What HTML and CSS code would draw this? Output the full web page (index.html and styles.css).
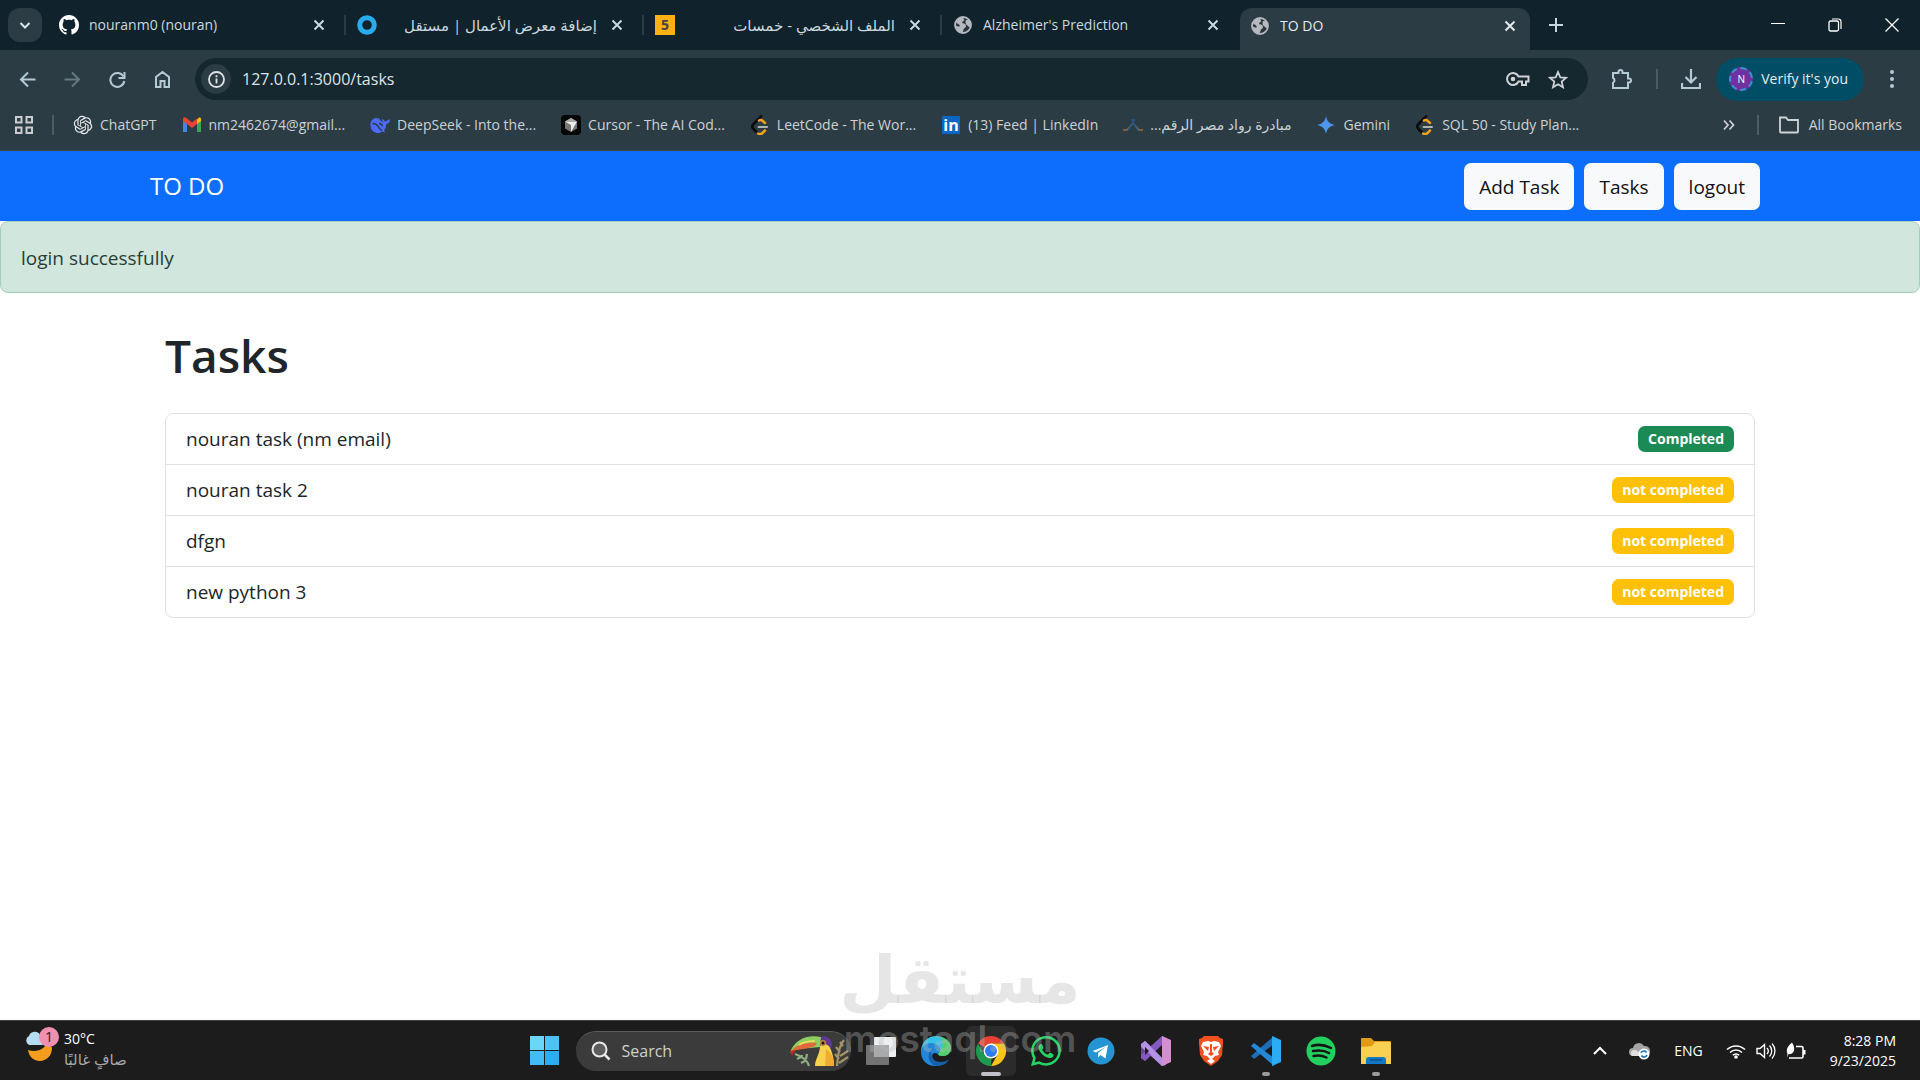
FILE: index.html
```html
<!DOCTYPE html>
<html lang="en">
<head>
    <title>TO DO</title>
    <meta charset="UTF-8">
    <meta name="viewport" content="width=device-width, initial-scale=1">
    <link rel="stylesheet" href="styles.css">
</head>
<body>
    <!-- shared icons -->
    <svg class="sprite" aria-hidden="true">
        <symbol id="x" viewBox="0 0 14 14"><path d="M2.500 2.500l9 9M11.500 2.500l-9 9" stroke="currentColor" stroke-width="2" fill="none"/></symbol>
        <symbol id="globe" viewBox="0 0 20 20">
            <circle cx="10" cy="10" r="8" fill="#28353b" stroke="#b5b8bf" stroke-width="1.800"/>
            <path d="M3 7c2-4 5-5 8-4.500-1 1-.5 2 .5 2.500C11 6.500 9 6 9 8c1.500.5 4 .5 4 3 0 1-1 2-2 2.500L9.500 17.500C5 17.500 3 14 2.500 10c1.500 1 2.500 1.500 3.500 1.500.5 0 1-.5.500-1.500C5.500 9 4 8.500 3 7zM13 5l3.500 0c1.500 2 1.500 4.500.5 7.500-1.500-.5-2-2-3.500-2.500-1-1.500-1.500-3-.5-5z" fill="#b5b8bf"/>
        </symbol>
        <symbol id="leet" viewBox="0 0 20 20">
            <path d="M11 1.500L3.500 9c-1.500 1.500-1.500 3.500 0 5L7 17.500" fill="none" stroke="#0a0a0a" stroke-width="2.500" stroke-linecap="round"/>
            <path d="M9 5.500c1.500-1 2.800-.5 3.800.5L15 8M8 18.500c1.500.8 3.200.7 4.500-.5L15 15.500" fill="none" stroke="#f5a11c" stroke-width="2.500" stroke-linecap="round"/>
            <path d="M8.500 12H17" stroke="#b3b3b3" stroke-width="2" stroke-linecap="round"/>
        </symbol>
    </svg>

    <header class="browser">
        <div class="tabstrip">
            <button class="tab-search" aria-label="Search tabs"><svg width="14" height="14" viewBox="0 0 14 14"><path d="M2.500 5L7 9.500 11.500 5" fill="none" stroke="#d9e6ec" stroke-width="2"/></svg></button>
            <div class="tab">
                <svg class="fav" viewBox="0 0 16 16"><path fill="#fff" d="M8 0C3.580 0 0 3.580 0 8c0 3.540 2.290 6.530 5.470 7.590.4.070.55-.17.55-.38 0-.19-.01-.82-.01-1.490-2.010.37-2.530-.49-2.690-.94-.09-.23-.48-.94-.82-1.130-.28-.15-.68-.52-.01-.53.63-.01 1.080.58 1.230.82.72 1.210 1.870.87 2.330.66.070-.52.280-.87.510-1.070-1.780-.2-3.640-.89-3.640-3.950 0-.87.310-1.590.82-2.150-.08-.2-.36-1.020.08-2.120 0 0 .67-.21 2.200.82.64-.18 1.320-.27 2-.27s1.360.09 2 .27c1.530-1.040 2.200-.82 2.200-.82.44 1.100.16 1.920.08 2.120.51.56.82 1.270.82 2.150 0 3.070-1.870 3.750-3.650 3.950.29.25.54.73.54 1.480 0 1.070-.01 1.930-.01 2.200 0 .21.15.46.55.38A8.010 8.010 0 0 0 16 8c0-4.420-3.580-8-8-8z"/></svg>
                <span class="tab-title">nouranm0 (nouran)</span>
                <button class="close" aria-label="Close tab"><svg><use href="#x"/></svg></button>
            </div>
            <div class="tab">
                <svg class="fav" viewBox="0 0 20 20"><circle cx="10" cy="10" r="7.300" fill="none" stroke="#2aabee" stroke-width="5"/></svg>
                <span class="tab-title" dir="rtl">إضافة معرض الأعمال | مستقل</span>
                <button class="close" aria-label="Close tab"><svg><use href="#x"/></svg></button>
            </div>
            <div class="tab">
                <svg class="fav" viewBox="0 0 20 20"><rect width="20" height="20" fill="#fbb114"/><text class="five" x="10" y="15" text-anchor="middle">5</text></svg>
                <span class="tab-title" dir="rtl">الملف الشخصي - خمسات</span>
                <button class="close" aria-label="Close tab"><svg><use href="#x"/></svg></button>
            </div>
            <div class="tab">
                <svg class="fav"><use href="#globe"/></svg>
                <span class="tab-title">Alzheimer's Prediction</span>
                <button class="close" aria-label="Close tab"><svg><use href="#x"/></svg></button>
            </div>
            <div class="tab active">
                <svg class="fav"><use href="#globe"/></svg>
                <span class="tab-title">TO DO</span>
                <button class="close" aria-label="Close tab"><svg><use href="#x"/></svg></button>
            </div>
            <button class="new-tab" aria-label="New tab"><svg width="14" height="14" viewBox="0 0 14 14"><path d="M7 0v14M0 7h14" stroke="#c5d8e0" stroke-width="2"/></svg></button>
            <div class="win-buttons">
                <button aria-label="Minimize"><svg width="14" height="14" viewBox="0 0 14 14"><path d="M0 5.500h14" stroke="#fff"/></svg></button>
                <button aria-label="Restore"><svg width="14" height="14" viewBox="0 0 14 14"><rect x="1" y="3" width="9.500" height="10" rx="1.500" fill="none" stroke="#fff" stroke-width="1.300"/><path d="M4 1h6.500a2.500 2.500 0 0 1 2.500 2.500V11" fill="none" stroke="#fff" stroke-width="1.200"/></svg></button>
                <button aria-label="Close"><svg width="14" height="14" viewBox="0 0 14 14"><path d="M.5.5l13 13M13.500.5l-13 13" stroke="#fff" stroke-width="1.300"/></svg></button>
            </div>
        </div>

        <div class="toolbar">
            <button class="tool" aria-label="Back"><svg width="17" height="17" viewBox="0 0 17 17"><path d="M16.500 8.500H2M9 1.500l-7 7 7 7" fill="none" stroke="#b4cad5" stroke-width="2"/></svg></button>
            <button class="tool" aria-label="Forward"><svg width="17" height="17" viewBox="0 0 17 17"><path d="M.5 8.500H15M8 1.500l7 7-7 7" fill="none" stroke="#667880" stroke-width="2"/></svg></button>
            <button class="tool" aria-label="Reload"><svg width="17" height="17" viewBox="0 0 17 17"><path d="M14.500 5.500A7 7 0 1 0 15.300 10" fill="none" stroke="#b4cad5" stroke-width="2"/><path d="M15.500 1v6h-6" fill="none" stroke="#b4cad5" stroke-width="2"/></svg></button>
            <button class="tool" aria-label="Home"><svg width="17" height="18" viewBox="0 0 17 18"><path d="M2 17V7l6.500-5L15 7v10h-4.500v-6h-4v6z" fill="none" stroke="#b4cad5" stroke-width="2"/></svg></button>
            <div class="omnibox">
                <button class="info" aria-label="Site information"><svg width="17" height="17" viewBox="0 0 17 17"><circle cx="8.500" cy="8.500" r="7.500" fill="none" stroke="#e0e3e5" stroke-width="1.800"/><path d="M8.500 7.500v5M8.500 4.200v2" stroke="#e0e3e5" stroke-width="1.800"/></svg></button>
                <input class="url" type="text" aria-label="Address" value="127.0.0.1:3000/tasks">
                <button aria-label="Passwords"><svg width="24" height="16" viewBox="0 0 24 16"><path d="M12.500 5.500A6 6 0 1 0 12.500 10.500H16V14H20V10.500H22.500V5.500Z" fill="none" stroke="#d0d3d6" stroke-width="2"/><circle cx="7" cy="8" r="2.300" fill="#d0d3d6"/></svg></button>
                <button aria-label="Bookmark this tab"><svg width="20" height="19" viewBox="0 0 20 19"><path d="M10 2l2.300 5.300 5.700.5-4.300 3.800 1.300 5.700-5-3-5 3 1.300-5.700L2 7.800l5.700-.5z" fill="none" stroke="#d0d3d6" stroke-width="1.800"/></svg></button>
            </div>
            <button class="ext" aria-label="Extensions"><svg width="22" height="22" viewBox="0 0 22 22"><path d="M2 5h5.500V4a2 2 0 0 1 4 0v1H17v5.500h1a2 2 0 0 1 0 4h-1V20H2v-5.200a2.800 2.800 0 0 0 0-5z" fill="none" stroke="#b4cad5" stroke-width="2"/></svg></button>
            <span class="divider"></span>
            <button class="download" aria-label="Downloads"><svg width="20" height="20" viewBox="0 0 20 20"><path d="M10 0v13M4.500 8l5.500 5.500L15.500 8M1 14v5h18v-5" fill="none" stroke="#b4cad5" stroke-width="2.200"/></svg></button>
            <button class="verify"><span class="avatar">N</span>Verify it's you</button>
            <button class="menu" aria-label="Menu"><svg width="6" height="20" viewBox="0 0 6 20"><g fill="#b4cad5"><circle cx="3" cy="3" r="2"/><circle cx="3" cy="10" r="2"/><circle cx="3" cy="17" r="2"/></g></svg></button>
        </div>

        <nav class="bookmarks" aria-label="Bookmarks">
            <button class="apps" aria-label="Apps"><svg width="18" height="18" viewBox="0 0 18 18"><path d="M1 1h5.500v5.500H1zM11.500 1H17v5.500h-5.500zM1 11.500h5.500V17H1zM11.500 11.500H17V17h-5.500z" fill="none" stroke="#c9cdd0" stroke-width="2"/></svg></button>
            <span class="divider"></span>
            <a href="#"><svg class="bm" viewBox="-1 -1 26 26"><path fill="#e8eaec" d="M22.2819 9.8211a5.9847 5.9847 0 0 0-.5157-4.9108 6.0462 6.0462 0 0 0-6.5098-2.9A6.0651 6.0651 0 0 0 4.9807 4.1818a5.9847 5.9847 0 0 0-3.9977 2.9 6.0462 6.0462 0 0 0 .7427 7.0966 5.98 5.98 0 0 0 .511 4.9107 6.051 6.051 0 0 0 6.5146 2.9001A5.9847 5.9847 0 0 0 13.2599 24a6.0557 6.0557 0 0 0 5.7718-4.2058 5.9894 5.9894 0 0 0 3.9977-2.9001 6.0557 6.0557 0 0 0-.7475-7.0729zm-9.022 12.6081a4.4755 4.4755 0 0 1-2.8764-1.0408l.1419-.0804 4.7783-2.7582a.7948.7948 0 0 0 .3927-.6813v-6.7369l2.02 1.1686a.071.071 0 0 1 .038.052v5.5826a4.504 4.504 0 0 1-4.4945 4.4944zm-9.6607-4.1254a4.4708 4.4708 0 0 1-.5346-3.0137l.142.0852 4.783 2.7582a.7712.7712 0 0 0 .7806 0l5.8428-3.3685v2.3324a.0804.0804 0 0 1-.0332.0615L9.74 19.9502a4.4992 4.4992 0 0 1-6.1408-1.6464zM2.3408 7.8956a4.485 4.485 0 0 1 2.3655-1.9728V11.6a.7664.7664 0 0 0 .3879.6765l5.8144 3.3543-2.0201 1.1685a.0757.0757 0 0 1-.071 0l-4.8303-2.7865A4.504 4.504 0 0 1 2.3408 7.872zm16.5963 3.8558L13.1038 8.364 15.1192 7.2a.0757.0757 0 0 1 .071 0l4.8303 2.7913a4.4944 4.4944 0 0 1-.6765 8.1042v-5.6772a.79.79 0 0 0-.407-.667zm2.0107-3.0231l-.142-.0852-4.7735-2.7818a.7759.7759 0 0 0-.7854 0L9.409 9.2297V6.8974a.0662.0662 0 0 1 .0284-.0615l4.8303-2.7866a4.4992 4.4992 0 0 1 6.6802 4.66zM8.3065 12.863l-2.02-1.1638a.0804.0804 0 0 1-.038-.0567V6.0742a4.4992 4.4992 0 0 1 7.3757-3.4537l-.142.0805L8.704 5.459a.7948.7948 0 0 0-.3927.6813zm1.0976-2.3654l2.602-1.4998 2.6069 1.4998v2.9994l-2.5974 1.4997-2.6067-1.4997Z"/></svg>ChatGPT</a>
            <a href="#"><svg class="bm" viewBox="0 0 20 20"><path d="M1 4v13h4V8z" fill="#4285f4"/><path d="M15 8v9h4V4z" fill="#34a853"/><path d="M15 4.500V9l4-3V4c0-2-2-2.500-4 .5z" fill="#fbbc04"/><path d="M1 6V4c0-2 2-2.500 4-.5l5 4 5-4V9l-5 4-5-4z" fill="#ea4335"/></svg>nm2462674@gmail...</a>
            <a href="#"><svg class="bm" viewBox="0 0 20 20"><path d="M20 4c-1.500 1.500-3 1-4.500 2.500-1.500-.5-2-2-3-3-.8 1.500 0 3 1 4.500C11 6 9 2.500 6 3 2 3.500 0 7 .5 11c.5 4.500 4 7 7.500 7 2 0 3-.7 4-1.500l3 1-.8-2.500c1.300-1.500 2-3.500 2-6C18.500 8.500 20 7 20 4z" fill="#4d6bfe"/><path d="M2.500 8.500c3 0 5 1.500 6 3.500s1.500 3 3.500 3.500M9 8.500c1.500 0 3 1 3.500 2.500" fill="none" stroke="#2b3c45" stroke-width="1.400"/></svg>DeepSeek - Into the...</a>
            <a href="#"><svg class="bm" viewBox="0 0 20 20"><rect width="20" height="20" rx="4" fill="#060606"/><path d="M10 3l6 3.500v7L10 17l-6-3.500v-7z" fill="#777"/><path d="M4 6.500h12L10 17v-7z" fill="#eee"/><path d="M4 6.500L10 3l6 3.500z" fill="#aaa"/></svg>Cursor - The AI Cod...</a>
            <a href="#"><svg class="bm"><use href="#leet"/></svg>LeetCode - The Wor...</a>
            <a href="#"><svg class="bm" viewBox="0 0 20 20"><rect x="1" y="1" width="18" height="18" rx="1" fill="#0a66c2"/><text class="in" x="10" y="16" text-anchor="middle">in</text></svg>(13) Feed | LinkedIn</a>
            <a href="#"><svg class="bm" viewBox="0 0 20 20"><path d="M0 15h4l6-7 6 7h4" fill="none" stroke="#a5673a" stroke-width="1.300"/><path d="M8 5h4M10 5v3L5 15M10 8l5 7" fill="none" stroke="#245a8e" stroke-width="1.500"/></svg><span dir="rtl">مبادرة رواد مصر الرقم...</span></a>
            <a href="#"><svg class="bm" viewBox="0 0 20 20"><path d="M10 1c.8 5 3.500 8 9 9-5.500 1-8.200 4-9 9-.8-5-3.500-8-9-9 5.500-1 8.200-4 9-9z" fill="#4d96ee"/></svg>Gemini</a>
            <a href="#"><svg class="bm"><use href="#leet"/></svg>SQL 50 - Study Plan...</a>
            <button class="more" aria-label="More bookmarks"><svg width="12" height="12" viewBox="0 0 12 12"><path d="M1 1.500L5 6l-4 4.500M6.500 1.500l4 4.500-4 4.500" fill="none" stroke="#d0d3d6" stroke-width="1.700"/></svg></button>
            <span class="divider"></span>
            <a class="all" href="#"><svg width="20" height="18" viewBox="0 0 20 18"><path d="M1 15.500v-14h6l2 2.500h10v11.500a1 1 0 0 1-1 1H2a1 1 0 0 1-1-1z" fill="none" stroke="#d0d3d6" stroke-width="1.800"/></svg>All Bookmarks</a>
        </nav>
    </header>

    <nav class="navbar">
        <a class="brand" href="#">TO DO</a>
        <div class="nav-links">
            <a class="btn" href="#">Add Task</a>
            <a class="btn" href="#">Tasks</a>
            <a class="btn" href="#">logout</a>
        </div>
    </nav>

    <div class="alert" role="alert">login successfully</div>

    <main class="container">
        <h1>Tasks</h1>
        <ul class="task-list">
            <li>nouran task (nm email) <span class="badge done">Completed</span></li>
            <li>nouran task 2 <span class="badge">not completed</span></li>
            <li>dfgn <span class="badge">not completed</span></li>
            <li>new python 3 <span class="badge">not completed</span></li>
        </ul>
    </main>

    <footer class="taskbar">
        <div class="weather">
            <svg width="36" height="36" viewBox="0 0 36 36">
                <path d="M4 24c9 3 18-1 19-9a13 13 0 0 1 5 7c0 8-6 13-12 13S5 31 4 24z" fill="#f39c1d"/>
                <path d="M5 19a5 5 0 0 1 0-9 6 6 0 0 1 11-1 5 5 0 0 1 2 10z" fill="#b5dcf0"/>
                <circle cx="25" cy="11" r="10" fill="#f08fb0"/>
                <text class="count" x="25" y="16" text-anchor="middle">1</text>
            </svg>
            <div class="weather-text"><span>30°C</span><span class="dim" dir="rtl">صافٍ غالبًا</span></div>
        </div>

        <div class="dock">
            <button class="start" aria-label="Start"><svg width="30" height="30" viewBox="0 0 30 30"><path d="M0 0h14v14H0z" fill="#6cd5fa"/><path d="M15 0h14v14H15z" fill="#4cc2f5"/><path d="M0 15h14v14H0z" fill="#42bcf3"/><path d="M15 15h14v14H15z" fill="#2aaef0"/></svg></button>
            <div class="search">
                <svg width="20" height="20" viewBox="0 0 20 20"><circle cx="8.500" cy="8.500" r="7" fill="#5c5c5c" stroke="#e8e8e8" stroke-width="2"/><path d="M13.500 13.500L18.500 18.500" stroke="#e8e8e8" stroke-width="2.500"/></svg>
                <input type="text" placeholder="Search" aria-label="Search">
                <svg class="toucan" width="62" height="32" viewBox="0 0 62 32">
                    <path d="M6 19c6 2 12 5 14 12M8 24l4-2M12 28l4-2M13 20l-1 3M18 19l-1 5" stroke="#8fae84" stroke-width="2.200" fill="none"/>
                    <path d="M48 31C49 20 50 11 55 5M51 21l8-5M50 28l9-6M51 17l-4-5M54 11l-3-4M50 24l-4-5" stroke="#a39468" stroke-width="2.200" fill="none"/>
                    <path d="M31 3c5-4 12-1 12 8l-3 6-6-6z" fill="#5f3a8e"/>
                    <path d="M31 11c4-4 9-2 11 4 2 5 3 10 3 16H26c0-7 5-12 5-20z" fill="#f8d24d"/>
                    <path d="M37 14c6 4 8 10 8 17h-9z" fill="#f0ac2e"/>
                    <path d="M32 2C19-1 5 4 1 18c7-6 16-4 30-6z" fill="#8fce62"/>
                    <path d="M28 8C19 7 9 9 4 14l-3 4c7-5 15-3 25-7z" fill="#e2683a"/>
                    <path d="M1 16l2 5 4-6z" fill="#b12d23"/>
                    <path d="M26 6c-8 0-12 1-16 4" stroke="#fce05a" stroke-width="1.500" fill="none"/>
                    <circle cx="34" cy="8" r="3" fill="#c88242"/><circle cx="34" cy="8" r="1.500" fill="#111"/>
                </svg>
            </div>
            <button class="app" aria-label="Task view"><svg width="32" height="32" viewBox="0 0 32 32"><rect x="1" y="10" width="23" height="20" rx="1" fill="#737373"/><rect x="9" y="2" width="22" height="20" rx="1" fill="#eceef0"/><path d="M9 10h15v12H9z" fill="#a8a9aa"/></svg></button>
            <button class="app" aria-label="Edge"><svg width="32" height="32" viewBox="0 0 32 32">
                <path d="M1 17C1 7 8 1 16 1s15 6 15 12c0 5-4 8-8 8-3 0-5-1-5-2 0-1 2-2 2-4 0-3-4-5-8-5-6 0-10 3-11 7z" fill="#35c1e8"/>
                <path d="M20 1.500C27 3 31 8 31 13c0 5-4 8-8 8-3 0-5-1-5-2 0-1 2-2 2-4 3-2 4-8 0-13.500z" fill="#55d06b"/>
                <path d="M1 17c0-5 5-9 10-9 5 0 9 3 9 7 0 2-2 3-2 4-5-3-7 1-5 5 1 3 4 6 8 6-2 1-4 1-6 1C7 31 1 25 1 17z" fill="#2286d9"/>
                <path d="M13 13c-4 6-1 14 8 14 3 0 6-1 8-3-2 5-7 7-12 7-8-1-12-12-4-18z" fill="#1660ad"/></svg></button>
            <button class="app current" aria-label="Chrome"><svg width="32" height="32" viewBox="0 0 32 32"><path d="M16 16L3 8.500A15 15 0 0 1 29 8.500H16z" fill="#e94134"/><path d="M16 8.500h13A15 15 0 0 1 16 31l6.500-11.300z" fill="#fcc31b"/><path d="M3 8.500l6.500 11.300c1.500 2.500 4 3.700 7 3.700L16 31A15 15 0 0 1 3 8.500z" fill="#1e9a50"/><circle cx="16" cy="16" r="7.500" fill="#fff"/><circle cx="16" cy="16" r="6" fill="#2d7bf0"/></svg></button>
            <button class="app" aria-label="WhatsApp"><svg width="30" height="30" viewBox="0 0 16 16"><path fill="#25d366" d="M13.601 2.326A7.850 7.850 0 0 0 7.994 0C3.627 0 .068 3.558.064 7.926c0 1.399.366 2.760 1.057 3.965L0 16l4.204-1.102a7.900 7.900 0 0 0 3.790.965h.004c4.368 0 7.926-3.558 7.930-7.930A7.900 7.900 0 0 0 13.600 2.326zM7.994 14.521a6.600 6.600 0 0 1-3.356-.92l-.24-.144-2.494.654.666-2.433-.156-.251a6.560 6.560 0 0 1-1.007-3.505c0-3.626 2.957-6.584 6.591-6.584a6.560 6.560 0 0 1 4.660 1.931 6.560 6.560 0 0 1 1.928 4.660c-.004 3.639-2.961 6.592-6.592 6.592m3.615-4.934c-.197-.099-1.170-.578-1.353-.646-.182-.065-.315-.099-.445.099-.133.197-.513.646-.627.775-.114.133-.232.148-.43.05-.197-.1-.836-.308-1.592-.985-.59-.525-.985-1.175-1.103-1.372-.114-.198-.011-.304.088-.403.087-.088.197-.232.296-.346.1-.114.133-.198.198-.33.065-.134.034-.248-.015-.347-.05-.099-.445-1.076-.612-1.470-.16-.389-.323-.335-.445-.34-.114-.007-.247-.007-.38-.007a.73.73 0 0 0-.529.247c-.182.198-.691.677-.691 1.654s.71 1.916.81 2.049c.098.133 1.394 2.132 3.383 2.992.47.205.84.326 1.129.418.475.152.904.129 1.246.08.38-.058 1.171-.48 1.338-.943.164-.464.164-.86.114-.943-.049-.084-.182-.133-.38-.232"/></svg></button>
            <button class="app" aria-label="Telegram"><svg width="28" height="28" viewBox="0 0 28 28"><circle cx="14" cy="14" r="13.500" fill="#2494d3"/><path d="M5.500 14L21 8l-2.500 13.500-5-3.500-2.500 2.500v-4.500l7.500-6-9.500 5.500z" fill="#fff"/></svg></button>
            <button class="app" aria-label="Visual Studio"><svg width="32" height="32" viewBox="0 0 32 32"><path d="M1 9l4-3 6 5.500v9L5 26l-4-3z" fill="#6b3fa0"/><path d="M5 6l18 18 3 6-4 1L1 12V9z" fill="#b18be0"/><path d="M1 20L22 1l4 2-3 6L5 26l-4-3z" fill="#8557c0"/><path d="M5 6l18 18-1 7L1 10z" fill="#b491e4"/><path d="M22 1l9 4v22l-9 4z" fill="#d58fce"/><path d="M5 12l4 4-4 4z" fill="#1c1c1c"/></svg></button>
            <button class="app" aria-label="Brave"><svg width="26" height="31" viewBox="0 0 26 31"><path d="M6 1h14l2 2 3 1v4l-1 12-4 6-7 5-7-5-4-6L1 8V4l3-1z" fill="#f1501f"/><path d="M5 7l5-1 3 1 3-1 5 1 2 4-3 6 1 3-4 1-3 3 3 2-4 3-4-3 3-2-3-3-4-1 1-3-3-6z" fill="#fff"/><path d="M5 11l6 1-1 4zM21 11l-6 1 1 4zM12 9h2v8l2 2-3 2-3-2 2-2z" fill="#f1501f"/></svg></button>
            <button class="app running" aria-label="Visual Studio Code"><svg width="32" height="32" viewBox="0 0 32 32"><path d="M1 21l3 3 20-15V1z" fill="#1b6fb8"/><path d="M1 11l3-3 20 15v8z" fill="#2389d6"/><path d="M22 1l9 4v22l-9 4z" fill="#2cacf2"/></svg></button>
            <button class="app" aria-label="Spotify"><svg width="30" height="30" viewBox="0 0 30 30"><circle cx="15" cy="15" r="14.500" fill="#23cf5f"/><path d="M6 10c6-2 13-1 19 2M7 15c6-1 11-1 16 2M7.500 20c5-1 9-.5 13 1.500" fill="none" stroke="#151515" stroke-width="2.500" stroke-linecap="round"/></svg></button>
            <button class="app running" aria-label="File Explorer"><svg width="30" height="28" viewBox="0 0 30 28"><path d="M0 2a1 1 0 0 1 1-1h9l3 3h16a1 1 0 0 1 1 1v8H0z" fill="#e09c18"/><path d="M0 10l11-1 3-4h16v22H0z" fill="#f9d050"/><path d="M5 27v-4a3 3 0 0 1 3-3h14a3 3 0 0 1 3 3v4z" fill="#1478c8"/><path d="M9 23h12" stroke="#0c528f" stroke-width="1.500"/></svg></button>
        </div>

        <div class="tray">
            <button aria-label="Show hidden icons"><svg width="14" height="10" viewBox="0 0 14 10"><path d="M1 8l6-6 6 6" fill="none" stroke="#fff" stroke-width="2"/></svg></button>
            <svg class="cloud" width="22" height="18" viewBox="0 0 22 18"><path d="M4 14a4 4 0 0 1 0-8 6 6 0 0 1 11-2 5 5 0 0 1 2 10z" fill="#a3a3a3"/><path d="M3 14c-3-3 0-7 4-6l7 6z" fill="#dedede"/><circle cx="15" cy="12" r="5.500" fill="#fff"/><path d="M12 11a3 3 0 0 1 5.500-.5M18 13a3 3 0 0 1-5.500.5" fill="none" stroke="#1976c5" stroke-width="1.600"/></svg>
            <span class="lang">ENG</span>
            <svg width="20" height="16" viewBox="0 0 20 16"><path d="M1 6.500a13 13 0 0 1 18 0M4 9.500a8.500 8.500 0 0 1 12 0M6.800 12.300a4.500 4.500 0 0 1 6.400 0" fill="none" stroke="#fff" stroke-width="1.500"/><circle cx="10" cy="14" r="1.800" fill="#fff"/></svg>
            <svg width="20" height="18" viewBox="0 0 20 18"><path d="M1 6.500h3l4.500-4v13L4 11.500H1z" fill="none" stroke="#fff" stroke-width="1.400"/><path d="M11 6a4.500 4.500 0 0 1 0 6M13.500 3.500a8 8 0 0 1 0 11M16 1.500a11 11 0 0 1 0 15" fill="none" stroke="#fff" stroke-width="1.300"/></svg>
            <svg width="20" height="18" viewBox="0 0 20 18"><path d="M10 4.500h5.500A1.500 1.500 0 0 1 17 6v8.500a1.500 1.500 0 0 1-1.500 1.500H3" fill="none" stroke="#fff" stroke-width="1.600"/><path d="M17 8h2.500v4.500H17z" fill="#fff"/><path d="M1.500 12C-.5 7 2 4 6 .5c2.500 4 3 7.500 1 10-1.500 1.500-3 2-4.500 1.500L1 15.500" fill="#fff"/></svg>
            <div class="clock"><span>8:28 PM</span><span>9/23/2025</span></div>
        </div>
    </footer>

    <div class="watermark" aria-hidden="true">
        <span class="mark-ar" lang="ar">مستقل</span>
        <span class="mark-en">mostaql.com</span>
    </div>
</body>
</html>
```

FILE: styles.css
```css
* {
    box-sizing: border-box;
}

body {
    margin: 0;
    min-height: 100vh;
    display: flex;
    flex-direction: column;
    position: relative;
    background: #fff;
    color: #212529;
    font-family: "Open Sans", "Noto Sans", "DejaVu Sans", sans-serif;
    font-size: 19px;
    line-height: 30px;
}

button {
    padding: 0;
    border: none;
    background: none;
    color: inherit;
    font: inherit;
    display: flex;
    align-items: center;
    justify-content: center;
    cursor: pointer;
}

input {
    border: none;
    outline: none;
    background: none;
    padding: 0;
    min-width: 0;
    font: inherit;
}

a {
    color: inherit;
    text-decoration: none;
}

svg {
    flex-shrink: 0;
}

.sprite {
    position: absolute;
    width: 0;
    height: 0;
}

/* browser window */
.browser {
    background: #2b3c45;
    color: #c9d8df;
    font-size: 14px;
    line-height: 20px;
    border-bottom: 1px solid #44484b;
}

.tabstrip {
    height: 50px;
    display: flex;
    align-items: center;
    background: #10222b;
    padding-left: 8px;
}

.tab-search {
    width: 34px;
    height: 34px;
    margin-right: 4px;
    border-radius: 12px;
    background: #2b3c45;
}

.tab {
    flex: 0 1 298px;
    min-width: 0;
    display: flex;
    align-items: center;
    gap: 10px;
    padding: 0 18px 0 13px;
}

.tab + .tab {
    background: linear-gradient(#2b3c45, #2b3c45) no-repeat left center / 2px 20px;
}

.fav {
    width: 20px;
    height: 20px;
}

.tab-title {
    flex: 1;
    overflow: hidden;
    white-space: nowrap;
}

.tab-title[dir="rtl"] {
    font-size: 15px;
    padding-right: 3px;
}

.close svg {
    width: 14px;
    height: 14px;
}

.tab + .tab.active {
    flex-basis: 290px;
    height: 42px;
    margin: 8px 6px 0 2px;
    padding: 0 13px 6px 10px;
    border-radius: 12px 12px 0 0;
    background: #2b3c45;
    color: #e4ebee;
}

.new-tab {
    width: 40px;
    height: 40px;
}

.win-buttons {
    display: flex;
    margin-left: auto;
}

.win-buttons button {
    width: 57px;
    height: 40px;
}

.five {
    font-size: 14px;
    font-weight: bold;
    fill: #444;
}

.in {
    font-size: 16px;
    font-weight: bold;
    fill: #fff;
}

.toolbar {
    height: 58px;
    display: flex;
    align-items: center;
    padding-left: 5px;
}

.tool {
    width: 45px;
    height: 40px;
}

.omnibox {
    flex: 1;
    height: 42px;
    margin-left: 10px;
    padding: 0 20px 0 6px;
    display: flex;
    align-items: center;
    gap: 18px;
    border-radius: 21px;
    background: #15272f;
}

.info {
    width: 30px;
    height: 30px;
    border-radius: 50%;
    background: #2b3c45;
}

.url {
    flex: 1;
    margin-left: -7px;
    color: #dce4e8;
    font-size: 16px;
}

.ext {
    width: 68px;
}

.divider {
    width: 2px;
    height: 20px;
    background: #4a5c65;
}

.download {
    width: 58px;
    padding-left: 8px;
}

.verify {
    height: 43px;
    padding: 0 16px 0 13px;
    gap: 8px;
    border-radius: 22px;
    background: #004d66;
    color: #e0eef4;
}

.avatar {
    width: 24px;
    height: 24px;
    border-radius: 50%;
    border: 2px dashed #3b8fd0;
    background: #7130a0;
    color: #fff;
    font-size: 10px;
}

.menu {
    width: 56px;
}

.bookmarks {
    height: 42px;
    padding: 0 18px 8px 15px;
    display: flex;
    align-items: center;
    color: #cdd1d4;
}

.bookmarks a {
    display: flex;
    align-items: center;
    gap: 7px;
    margin-right: 25px;
    white-space: nowrap;
}

.bm {
    width: 20px;
    height: 20px;
}

.bookmarks .divider {
    margin: 0 19px;
}

.more {
    margin-left: auto;
}

.bookmarks .more + .divider {
    margin: 0 20px 0 22px;
}

.bookmarks .all {
    gap: 10px;
    margin-right: 0;
}

/* page */
.navbar {
    height: 70px;
    padding: 0 160px 0 150px;
    display: flex;
    align-items: center;
    justify-content: space-between;
    background: #0d6efd;
}

.brand {
    color: #fff;
    font-size: 24px;
}

.nav-links {
    display: flex;
    gap: 10px;
}

.btn {
    padding: 9px 15px 8px;
    border-radius: 7px;
    background: #f8f9fa;
    color: #111;
}

.alert {
    padding: 21px 20px 19px;
    border: 1px solid #a3cfbb;
    border-radius: 8px;
    background: #d1e7dd;
    color: #2a3d36;
}

.container {
    flex: 1;
    padding: 32px 165px 0;
}

h1 {
    margin: 0 0 28px;
    font-size: 46px;
    font-weight: 600;
    line-height: 60px;
}

.task-list {
    margin: 0;
    padding: 0;
    list-style: none;
    border: 1px solid #dee2e6;
    border-radius: 8px;
}

.task-list li {
    height: 50px;
    padding: 0 20px;
    display: flex;
    align-items: center;
    justify-content: space-between;
}

.task-list li + li {
    height: 51px;
    border-top: 1px solid #dee2e6;
}

.badge {
    padding: 3px 10px;
    border-radius: 7px;
    background: #ffc107;
    color: #fff;
    font-size: 14px;
    font-weight: 700;
    line-height: 20px;
}

.badge.done {
    background: #1c8a55;
}

/* desktop taskbar */
.taskbar {
    height: 60px;
    display: grid;
    grid-template-columns: 1fr auto 1fr;
    align-items: center;
    background: #1c1c1c;
    border-top: 1px solid #3d4241;
    color: #fff;
    font-size: 14px;
    line-height: 20px;
}

.weather {
    display: flex;
    gap: 4px;
    padding: 0 0 6px 24px;
}

.weather-text,
.clock {
    display: flex;
    flex-direction: column;
}

.weather-text {
    padding-top: 3px;
}

.dim {
    color: #a9a9a9;
    font-size: 15px;
}

.count {
    font-size: 14px;
    fill: #222;
}

.dock {
    display: flex;
    align-items: center;
    padding-left: 10px;
}

.start {
    margin-right: 16px;
}

.search {
    width: 275px;
    height: 40px;
    margin-right: 5px;
    padding-left: 15px;
    display: flex;
    align-items: center;
    gap: 11px;
    border-radius: 20px;
    border-top: 1px solid #5a5a5a;
    background: #3b3b3b;
}

.search input {
    flex: 1;
    color: #fff;
    font-size: 16px;
}

.search input::placeholder {
    color: #cfcfcf;
}

.app {
    width: 50px;
    height: 50px;
    margin-right: 5px;
    border-radius: 6px;
    position: relative;
}

.app:last-child {
    margin-right: 0;
}

.current {
    background: #2b2b2b;
}

.current::after,
.running::after {
    content: "";
    position: absolute;
    left: 50%;
    bottom: 0;
    width: 8px;
    height: 4px;
    margin-left: -4px;
    border-radius: 2px;
    background: #9a9a9a;
}

.current::after {
    width: 20px;
    margin-left: -10px;
    background: #c0c0c8;
}

.tray {
    display: flex;
    align-items: center;
    justify-content: flex-end;
    gap: 10px;
    padding-right: 24px;
}

.cloud {
    margin-left: 12px;
}

.lang {
    margin: 0 13px;
}

.clock {
    margin-left: 14px;
    text-align: right;
}

/* site mark laid over the bottom of the screen */
.watermark {
    position: absolute;
    left: 0;
    right: 0;
    bottom: 22px;
    display: flex;
    flex-direction: column;
    align-items: center;
    gap: 6px;
    color: rgba(186, 186, 186, 0.36);
    pointer-events: none;
}

.mark-ar {
    font-family: "DejaVu Sans", sans-serif;
    font-size: 66px;
    font-weight: bold;
    line-height: 66px;
}

.mark-en {
    font-family: Inter, sans-serif;
    font-size: 37px;
    font-weight: 600;
    line-height: 38px;
}
```
